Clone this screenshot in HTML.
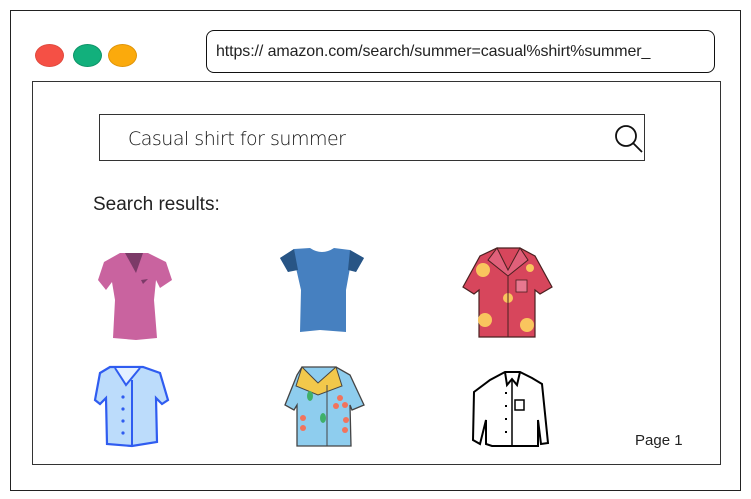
<!DOCTYPE html>
<html><head><style>
body{margin:0;width:751px;height:499px;background:#fff;position:relative;overflow:hidden;font-family:"Liberation Sans",sans-serif}
.a{position:absolute}
</style></head><body>
<div class="a" style="left:10px;top:10px;width:729px;height:479px;border:1.5px solid #222"></div>
<div class="a" style="left:35px;top:44px;width:27px;height:21px;border-radius:50%;background:#f55045;border:1px solid #e04a3e"></div>
<div class="a" style="left:73px;top:44px;width:27px;height:21px;border-radius:50%;background:#12b07c;border:1px solid #0e9468"></div>
<div class="a" style="left:108px;top:44px;width:27px;height:21px;border-radius:50%;background:#fbaa0c;border:1px solid #e0950a"></div>
<div class="a" style="left:206px;top:30px;width:509px;height:43px;border:1.5px solid #111;border-radius:8px;box-sizing:border-box"></div>
<div class="a" style="left:216px;top:43px;font-size:16px;color:#222;letter-spacing:-0.1px">https:// amazon.com/search/summer=casual%shirt%summer_</div>
<div class="a" style="left:32px;top:81px;width:687px;height:382px;border:1.5px solid #333"></div>
<div class="a" style="left:99px;top:114px;width:546px;height:47px;border:1.5px solid #333;box-sizing:border-box"></div>
<div class="a" style="left:128px;top:128px;font-size:19px;color:#111;font-family:'DejaVu Sans',sans-serif;font-weight:300;letter-spacing:-0.5px">Casual shirt for summer</div>
<svg class="a" style="left:610px;top:120px" width="35" height="35"><circle cx="16" cy="16" r="10" fill="none" stroke="#111" stroke-width="1.8"/><line x1="23" y1="23" x2="32" y2="32" stroke="#111" stroke-width="1.8"/></svg>
<div class="a" style="left:93px;top:194px;font-size:19px;color:#222">Search results:</div>
<div class="a" style="left:635px;top:432px;font-size:15px;color:#222">Page 1</div>
<svg class="a" style="left:0;top:0" width="751" height="499">
<path d="M120 253 L148 253 L166 262 L172 280 L160 288 L156 280 L154 300 L157 338 L136 340 L113 338 L115 300 L112 282 L106 290 L98 280 L104 262 Z" fill="#c9639f"/>
<path d="M125 253 L143 253 L136 273 Z" fill="#7c3a68"/>
<path d="M141 280 L148 279 L143 284Z" fill="#7c3a68"/>
<path d="M294 249 L310 248 Q322 256 334 248 L350 250 L364 258 L356 272 L350 268 L346 290 L346 332 L320 330 L300 332 L301 290 L296 268 L288 272 L280 258 Z" fill="#4680c0"/>
<path d="M280 258 L294 249 L298 270 L288 272Z M364 258 L350 250 L348 270 L356 272Z" fill="#285585"/>
<path d="M497 248 L520 248 L535 256 L552 287 L540 294 L535 290 L535 337 L479 337 L479 290 L474 294 L463 287 L480 256 Z" fill="#d7465c" stroke="#4a2020" stroke-width="1.2"/>
<path d="M497 248 L508 270 L520 248 L528 260 L508 276 L488 260Z" fill="#e0607a" stroke="#4a2020" stroke-width="1"/>
<circle cx="483" cy="270" r="7" fill="#f9c55e"/><circle cx="508" cy="298" r="5" fill="#f9c55e"/><circle cx="485" cy="320" r="7" fill="#f9c55e"/><circle cx="527" cy="325" r="7" fill="#f9c55e"/><circle cx="530" cy="268" r="4" fill="#f9c55e"/>
<rect x="516" y="280" width="11" height="12" fill="#e87890" stroke="#4a2020" stroke-width="0.8"/>
<line x1="508" y1="276" x2="508" y2="337" stroke="#4a2020" stroke-width="1"/>
<path d="M110 367 L143 367 L160 373 L168 400 L162 404 L156 398 L157 442 L132 446 L107 444 L106 398 L100 404 L95 400 L100 373 Z" fill="#bcdcfb" stroke="#2f5cf0" stroke-width="2.2"/>
<path d="M115 368 L126 385 L140 368" fill="#e4f0ff" stroke="#2f5cf0" stroke-width="2"/>
<line x1="132" y1="380" x2="132" y2="445" stroke="#2f5cf0" stroke-width="2"/>
<g fill="#2f5cf0"><circle cx="123" cy="397" r="1.6"/><circle cx="123" cy="409" r="1.6"/><circle cx="123" cy="421" r="1.6"/><circle cx="123" cy="433" r="1.6"/></g>
<path d="M302 367 L336 367 L350 375 L364 405 L352 410 L350 405 L351 446 L297 446 L297 405 L294 410 L285 405 L297 375 Z" fill="#8ecdee" stroke="#444" stroke-width="1.3"/>
<path d="M302 367 L318 383 L336 367 L342 386 L318 395 L296 386Z" fill="#f2c84b" stroke="#444" stroke-width="1"/>
<line x1="327" y1="385" x2="327" y2="446" stroke="#444" stroke-width="1"/>
<g fill="#f2735c"><circle cx="340" cy="398" r="3"/><circle cx="345" cy="405" r="3"/><circle cx="336" cy="406" r="3"/><circle cx="303" cy="418" r="3"/><circle cx="346" cy="420" r="3"/><circle cx="345" cy="430" r="3"/><circle cx="303" cy="428" r="3"/></g>
<g fill="#3fb06a"><ellipse cx="310" cy="396" rx="3" ry="5"/><ellipse cx="323" cy="418" rx="3" ry="5"/></g>
<path d="M505 372 L520 372 L532 378 L542 384 L548 443 L541 444 L538 420 L538 446 L492 446 L486 444 L486 420 L480 444 L473 440 L474 392 L490 380 Z" fill="#fff" stroke="#000" stroke-width="2"/>
<path d="M505 372 L507 385 L512 379 L517 385 L520 372" fill="none" stroke="#000" stroke-width="2"/>
<line x1="512" y1="380" x2="512" y2="446" stroke="#000" stroke-width="1.5"/>
<rect x="515" y="400" width="9" height="10" fill="none" stroke="#000" stroke-width="1.5"/>
<g fill="#000"><rect x="505" y="392" width="2" height="2"/><rect x="505" y="405" width="2" height="2"/><rect x="505" y="418" width="2" height="2"/><rect x="505" y="431" width="2" height="2"/></g>
</svg>
</body></html>
